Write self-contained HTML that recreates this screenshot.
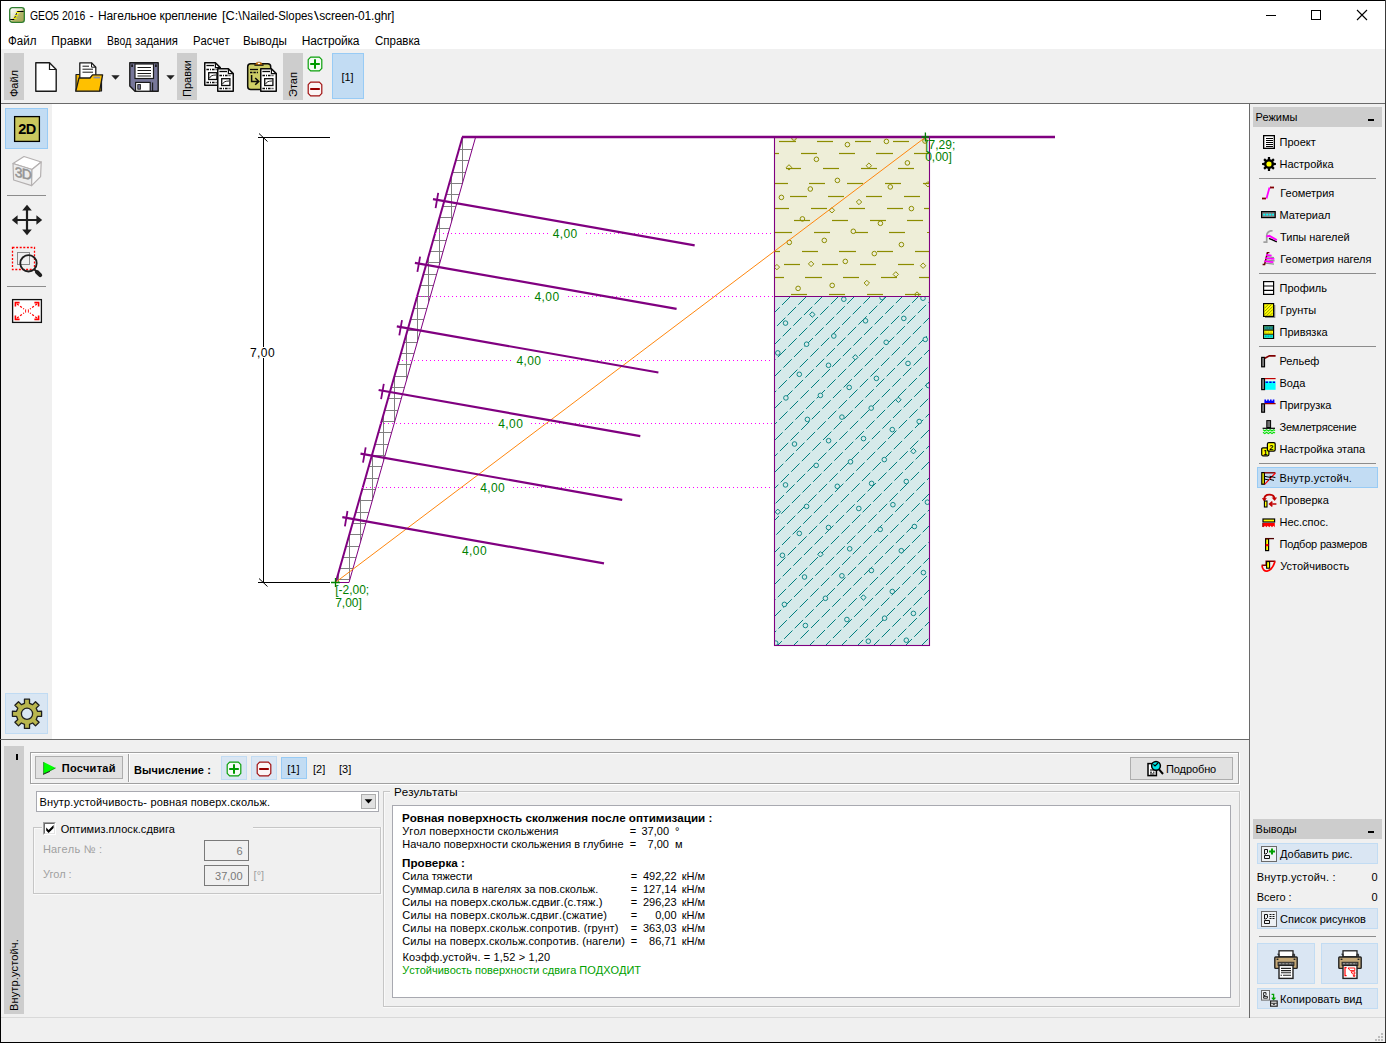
<!DOCTYPE html>
<html><head><meta charset="utf-8"><title>GEO5</title>
<style>
html,body{margin:0;padding:0}
body{width:1386px;height:1043px;position:relative;overflow:hidden;background:#f0f0f0;font-family:"Liberation Sans", sans-serif;}
.a{position:absolute;display:block}
.t{position:absolute;white-space:pre;}
</style></head><body>
<div class="a" style="left:0px;top:0px;width:1386px;height:49px;background:#fff;"></div>
<svg class="a" style="left:9px;top:7px;" width="16" height="16" viewBox="0 0 16 16">
<defs><linearGradient id="ag" x1="0" y1="0" x2="1" y2="1"><stop offset="0" stop-color="#fff"/><stop offset="0.45" stop-color="#e4e6d0"/><stop offset="0.55" stop-color="#b4b66c"/><stop offset="1" stop-color="#a3a455"/></linearGradient></defs>
<rect x="0.7" y="0.7" width="14.6" height="14.6" rx="2.6" fill="url(#ag)" stroke="#2e7d2e" stroke-width="1.3"/>
<path d="M1.2 12.5H5L8.3 4.5H14.6" fill="none" stroke="#000" stroke-width="1"/>
<path d="M6.8 5.6h3.6M5.6 8.6h3.2M4.4 11.4h3.2" stroke="#f4f000" stroke-width="1.1"/>
</svg>
<div class="t" style="left:30.4px;top:10px;font-size:12px;line-height:12px;color:#000;font-kerning:none;transform-origin:0 0;transform:scaleX(0.8659);">GEO5</div>
<div class="t" style="left:62.4px;top:10px;font-size:12px;line-height:12px;color:#000;font-kerning:none;transform-origin:0 0;transform:scaleX(0.8710);">2016</div>
<div class="t" style="left:89.6px;top:10px;font-size:12px;line-height:12px;color:#000;font-kerning:none;">-</div>
<div class="t" style="left:97.9px;top:10px;font-size:12px;line-height:12px;color:#000;letter-spacing:-0.15px;font-kerning:none;">Нагельное</div>
<div class="t" style="left:159.6px;top:10px;font-size:12px;line-height:12px;color:#000;letter-spacing:-0.156px;font-kerning:none;">крепление</div>
<div class="t" style="left:221.7px;top:10px;font-size:12px;line-height:12px;color:#000;font-kerning:none;transform-origin:0 0;transform:scaleX(1.0667);">[C:\</div>
<div class="t" style="left:242.2px;top:10px;font-size:12px;line-height:12px;color:#000;font-kerning:none;transform-origin:0 0;transform:scaleX(0.9512);">Nailed-Slopes</div>
<div class="t" style="left:314.1px;top:10px;font-size:12px;line-height:12px;color:#000;font-kerning:none;transform-origin:0 0;transform:scaleX(1.4222);">\</div>
<div class="t" style="left:319.3px;top:10px;font-size:12px;line-height:12px;color:#000;letter-spacing:-0.183px;font-kerning:none;">screen-01.ghr]</div>
<svg class="a" style="left:1260px;top:5px;" width="115" height="22" viewBox="0 0 115 22">
<path d="M6 10.5H16" stroke="#000" stroke-width="1"/>
<rect x="51.5" y="5.5" width="9" height="9" fill="none" stroke="#000" stroke-width="1"/>
<path d="M97 5L107 15M107 5L97 15" stroke="#000" stroke-width="1.1"/>
</svg>
<div class="t" style="left:8.3px;top:35px;font-size:12px;line-height:12px;color:#000;font-kerning:none;transform-origin:0 0;transform:scaleX(0.9627);">Файл</div>
<div class="t" style="left:51.3px;top:35px;font-size:12px;line-height:12px;color:#000;letter-spacing:0.03px;font-kerning:none;">Правки</div>
<div class="t" style="left:106.7px;top:35px;font-size:12px;line-height:12px;color:#000;font-kerning:none;transform-origin:0 0;transform:scaleX(0.8652);">Ввод</div>
<div class="t" style="left:134.6px;top:35px;font-size:12px;line-height:12px;color:#000;font-kerning:none;transform-origin:0 0;transform:scaleX(0.9403);">задания</div>
<div class="t" style="left:192.5px;top:35px;font-size:12px;line-height:12px;color:#000;font-kerning:none;transform-origin:0 0;transform:scaleX(0.9390);">Расчет</div>
<div class="t" style="left:243.3px;top:35px;font-size:12px;line-height:12px;color:#000;font-kerning:none;transform-origin:0 0;transform:scaleX(0.9671);">Выводы</div>
<div class="t" style="left:301.7px;top:35px;font-size:12px;line-height:12px;color:#000;letter-spacing:-0.141px;font-kerning:none;">Настройка</div>
<div class="t" style="left:374.5px;top:35px;font-size:12px;line-height:12px;color:#000;font-kerning:none;transform-origin:0 0;transform:scaleX(0.9592);">Справка</div>
<div class="a" style="left:0px;top:103px;width:1386px;height:1px;background:#6a6a6a;"></div>
<div class="a" style="left:4px;top:53px;width:20px;height:47px;background:#cdcdcd"></div><div class="t" style="left:4px;top:100px;width:47px;height:20px;line-height:20px;font-size:11px;transform-origin:0 0;transform:rotate(-90deg);text-align:left;padding-left:3px;box-sizing:border-box;color:#000">Файл</div>
<div class="a" style="left:177px;top:53px;width:20px;height:47px;background:#cdcdcd"></div><div class="t" style="left:177px;top:100px;width:47px;height:20px;line-height:20px;font-size:11px;transform-origin:0 0;transform:rotate(-90deg);text-align:left;padding-left:3px;box-sizing:border-box;color:#000">Правки</div>
<div class="a" style="left:283px;top:53px;width:20px;height:47px;background:#cdcdcd"></div><div class="t" style="left:283px;top:100px;width:47px;height:20px;line-height:20px;font-size:11px;transform-origin:0 0;transform:rotate(-90deg);text-align:left;padding-left:3px;box-sizing:border-box;color:#000">Этап</div>
<svg class="a" style="left:34px;top:61px;" width="24" height="32" viewBox="0 0 24 32">
<path d="M1.8 1.8H15.5L22.2 8.5V30.2H1.8Z" fill="#fff" stroke="#1a1a1a" stroke-width="1.4" stroke-linejoin="round"/>
<path d="M15.5 1.8V8.5H22.2" fill="none" stroke="#1a1a1a" stroke-width="1.2"/>
</svg>
<svg class="a" style="left:74px;top:61px;" width="30" height="32" viewBox="0 0 30 32">
<path d="M2 30V13.5H8L9.5 15.5H27.5V30Z" fill="#f0b400" stroke="#1a1a1a" stroke-width="1.2" stroke-linejoin="round"/>
<path d="M5.8 1.8H17.5L21.8 6.2V19H5.8Z" fill="#fff" stroke="#1a1a1a" stroke-width="1.3" stroke-linejoin="round"/>
<path d="M17.5 1.8V6.2H21.8" fill="none" stroke="#1a1a1a" stroke-width="1"/>
<path d="M8.5 5.2H15M8.5 8.2H19M8.5 11.2H19" stroke="#1a1a1a" stroke-width="1"/>
<path d="M1.8 30.2L5 17H16L18.5 13.8H28.6L25.6 30.2Z" fill="#ffc000" stroke="#1a1a1a" stroke-width="1.3" stroke-linejoin="round"/>
<rect x="19.5" y="15.6" width="6.5" height="1.8" fill="#8a8fa8"/>
</svg>
<svg class="a" style="left:111px;top:75px;" width="9" height="5" viewBox="0 0 9 5"><path d="M0.3 0.3H8.7L4.5 4.8Z" fill="#222"/></svg>
<svg class="a" style="left:166px;top:75px;" width="9" height="5" viewBox="0 0 9 5"><path d="M0.3 0.3H8.7L4.5 4.8Z" fill="#222"/></svg>
<svg class="a" style="left:128px;top:61px;" width="32" height="32" viewBox="0 0 32 32">
<path d="M1.8 1.8H30.2V30.2H7L1.8 25Z" fill="#77779a" stroke="#1a1a1a" stroke-width="1.4" stroke-linejoin="round"/>
<rect x="7" y="3" width="18.5" height="14.5" fill="#fff" stroke="#1a1a1a" stroke-width="1.2"/>
<path d="M9.5 6.5H23M9.5 9.5H23M9.5 12.5H23M9.5 15H23" stroke="#1a1a1a" stroke-width="1.1"/>
<rect x="3.2" y="3.4" width="1.8" height="2.6" fill="#1a1a1a"/><rect x="27" y="3.4" width="1.8" height="2.6" fill="#1a1a1a"/>
<rect x="7.6" y="21.4" width="14.6" height="8.8" fill="#fff" stroke="#1a1a1a" stroke-width="1.2"/>
<rect x="9.8" y="23.6" width="2.6" height="4.6" fill="#77779a" stroke="#1a1a1a" stroke-width="0.9"/>
<path d="M24.6 21.4V30" stroke="#1a1a1a" stroke-width="1.1"/>
</svg>
<svg class="a" style="left:203px;top:61px;" width="32" height="32" viewBox="0 0 32 32"><g transform="translate(1,1)">
<path d="M0.75 0.75H11.4L16.25 5.6V23.25H0.75Z" fill="#fff" stroke="#0a0a0a" stroke-width="1.5" stroke-linejoin="round"/>
<path d="M11.4 0.75V5.6H16.25" fill="none" stroke="#0a0a0a" stroke-width="1.2"/>
<path d="M2.4 3.5H10" stroke="#0a0a0a" stroke-width="1.3"/>
<path d="M2.4 7.5H14" stroke="#0a0a0a" stroke-width="1.3" stroke-dasharray="2.6 1 1 1"/>
<rect x="4.7" y="10.7" width="8.2" height="6.8" fill="#fff" stroke="#0a0a0a" stroke-width="1.3"/>
<path d="M5.6 16C6.6 13.6 8.6 13.2 12 13" fill="none" stroke="#0a0a0a" stroke-width="0.9"/>
<path d="M2.4 20.5H14" stroke="#0a0a0a" stroke-width="1.3" stroke-dasharray="2.6 1 1 1"/>
</g><g transform="translate(14,7)">
<path d="M0.75 0.75H11.4L16.25 5.6V23.25H0.75Z" fill="#fff" stroke="#0a0a0a" stroke-width="1.5" stroke-linejoin="round"/>
<path d="M11.4 0.75V5.6H16.25" fill="none" stroke="#0a0a0a" stroke-width="1.2"/>
<path d="M2.4 3.5H10" stroke="#0a0a0a" stroke-width="1.3"/>
<path d="M2.4 7.5H14" stroke="#0a0a0a" stroke-width="1.3" stroke-dasharray="2.6 1 1 1"/>
<rect x="4.7" y="10.7" width="8.2" height="6.8" fill="#fff" stroke="#0a0a0a" stroke-width="1.3"/>
<path d="M5.6 16C6.6 13.6 8.6 13.2 12 13" fill="none" stroke="#0a0a0a" stroke-width="0.9"/>
<path d="M2.4 20.5H14" stroke="#0a0a0a" stroke-width="1.3" stroke-dasharray="2.6 1 1 1"/>
</g></svg>
<svg class="a" style="left:246px;top:61px;" width="32" height="32" viewBox="0 0 32 32">
<rect x="1.7" y="2.8" width="23" height="25.6" rx="3" fill="#cdcd66" stroke="#0a0a0a" stroke-width="1.5"/>
<rect x="8.4" y="3.4" width="9.2" height="1.4" fill="#0a0a0a"/>
<path d="M9.6 3.4C9.6 0.4 16.2 0.4 16.2 3.4Z" fill="#e07a00" stroke="#8a4a00" stroke-width="0.6"/>
<ellipse cx="12.9" cy="2.5" rx="1.2" ry="0.7" fill="#fff"/>
<path d="M4 8.5H12" stroke="#0a0a0a" stroke-width="1.3"/>
<path d="M4 11.5H12" stroke="#0a0a0a" stroke-width="1.3" stroke-dasharray="2.4 1"/>
<path d="M5.6 14V20.4H12.4M9.2 17L12.8 20.4L9.2 23.8" fill="none" stroke="#0a0a0a" stroke-width="1.5"/>
<g transform="translate(14,7)">
<path d="M0.75 0.75H11.4L16.25 5.6V23.25H0.75Z" fill="#fff" stroke="#0a0a0a" stroke-width="1.5" stroke-linejoin="round"/>
<path d="M11.4 0.75V5.6H16.25" fill="none" stroke="#0a0a0a" stroke-width="1.2"/>
<path d="M2.4 3.5H10" stroke="#0a0a0a" stroke-width="1.3"/>
<path d="M2.4 7.5H14" stroke="#0a0a0a" stroke-width="1.3" stroke-dasharray="2.6 1 1 1"/>
<rect x="4.7" y="10.7" width="8.2" height="6.8" fill="#fff" stroke="#0a0a0a" stroke-width="1.3"/>
<path d="M5.6 16C6.6 13.6 8.6 13.2 12 13" fill="none" stroke="#0a0a0a" stroke-width="0.9"/>
<path d="M2.4 20.5H14" stroke="#0a0a0a" stroke-width="1.3" stroke-dasharray="2.6 1 1 1"/>
</g></svg>
<svg class="a" style="left:307px;top:56px;" width="16" height="16" viewBox="0 0 16 16"><path d="M3.6 1.2H12.4L14.8 3.6V12.4L12.4 14.8H3.6L1.2 12.4V3.6Z" fill="#f6fbf6" stroke="#0aa00a" stroke-width="1.2" stroke-linejoin="round"/><path d="M8 3.2V12.8M3.2 8H12.8" stroke="#009a00" stroke-width="2"/></svg>
<svg class="a" style="left:307px;top:81px;" width="16" height="16" viewBox="0 0 16 16"><path d="M3.6 1.2H12.4L14.8 3.6V12.4L12.4 14.8H3.6L1.2 12.4V3.6Z" fill="#fbf6f6" stroke="#a01010" stroke-width="1.2" stroke-linejoin="round"/><path d="M3.2 8H12.8" stroke="#960000" stroke-width="2"/></svg>
<div class="a" style="left:332px;top:53px;width:32px;height:46px;background:#c2dcf3;border:1px solid #98cbf5;box-sizing:border-box;"></div>
<div class="t" style="left:341.4px;top:72px;font-size:11px;line-height:11px;color:#000;">[1]</div>
<div class="a" style="left:0px;top:1017px;width:1386px;height:1px;background:#d9d9d9;"></div>
<div class="a" style="left:0px;top:0px;width:1px;height:1043px;background:#000;"></div>
<div class="a" style="left:0px;top:0px;width:1386px;height:1px;background:#000;"></div>
<div class="a" style="left:1385px;top:0px;width:1px;height:1043px;background:#3a3a3a;"></div>
<div class="a" style="left:0px;top:1042px;width:1386px;height:1px;background:#000;"></div>
<svg class="a" style="left:1370px;top:1028px;" width="14" height="14" viewBox="0 0 14 14"><rect x="11" y="5" width="2" height="2" fill="#bcbcbc"/><rect x="8" y="8" width="2" height="2" fill="#bcbcbc"/><rect x="11" y="8" width="2" height="2" fill="#bcbcbc"/><rect x="5" y="11" width="2" height="2" fill="#bcbcbc"/><rect x="8" y="11" width="2" height="2" fill="#bcbcbc"/><rect x="11" y="11" width="2" height="2" fill="#bcbcbc"/></svg>
<div class="a" style="left:1px;top:104px;width:51px;height:635px;background:#f0f0f0;"></div>
<div class="a" style="left:52px;top:104px;width:1197px;height:635px;background:#fff;"></div>
<div class="a" style="left:0px;top:739px;width:1250px;height:1px;background:#6a6a6a;"></div>
<div class="a" style="left:5px;top:108px;width:43px;height:41px;background:#c2dcf3;border:1px solid #98cbf5;box-sizing:border-box;"></div>
<svg class="a" style="left:13px;top:115px;" width="28" height="28" viewBox="0 0 28 28"><rect x="1.6" y="1.6" width="24.8" height="24.8" fill="#cbc85e" stroke="#000" stroke-width="1.3"/>
<text x="14" y="19.2" font-family="Liberation Sans" font-weight="700" font-size="14.5" text-anchor="middle" fill="#000" letter-spacing="-0.6">2D</text></svg>
<svg class="a" style="left:11px;top:154px;" width="32" height="34" viewBox="0 0 32 34">
<path d="M2 9.5L13 2.5L30.2 8L21 15.5Z" fill="#fff" stroke="#b4b0b0" stroke-width="1.2" stroke-linejoin="round"/>
<path d="M2 9.5L21 15.5L20.6 31.6L2.6 26Z" fill="#ececec" stroke="#b4b0b0" stroke-width="1.2" stroke-linejoin="round"/>
<path d="M21 15.5L30.2 8L29.6 22.6L20.6 31.6Z" fill="#f8f8f8" stroke="#b4b0b0" stroke-width="1.2" stroke-linejoin="round"/>
<text x="11.8" y="24.2" font-family="Liberation Sans" font-weight="400" font-size="14" text-anchor="middle" fill="#939393" stroke="#939393" stroke-width="0.5" transform="translate(11.5 20) skewY(12) translate(-11.5 -20)" letter-spacing="-0.9">3D</text>
</svg>
<div class="a" style="left:7px;top:195px;width:39px;height:1px;background:#8c8c8c;"></div>
<svg class="a" style="left:11px;top:204px;" width="32" height="32" viewBox="0 0 32 32">
<path d="M16 4V28M4 16H28" stroke="#1e1e1e" stroke-width="2.2"/>
<path d="M16 0.8L20.8 6.6H11.2ZM16 31.2L20.8 25.4H11.2ZM0.8 16L6.6 11.2V20.8ZM31.2 16L25.4 11.2V20.8Z" fill="#1e1e1e"/>
</svg>
<svg class="a" style="left:10px;top:245px;" width="34" height="34" viewBox="0 0 34 34">
<rect x="2.5" y="2.5" width="22" height="22" fill="none" stroke="#ff0000" stroke-width="1.3" stroke-dasharray="2 1.6"/>
<rect x="7.5" y="7.5" width="12" height="12" fill="none" stroke="#8a8a8a" stroke-width="1"/>
<circle cx="18.5" cy="18.3" r="8.2" fill="none" stroke="#1e1e1e" stroke-width="1.8"/>
<path d="M24.6 24.6L27 27" stroke="#1e1e1e" stroke-width="2"/>
<path d="M27 27L30.2 30.2" stroke="#1e1e1e" stroke-width="4" stroke-linecap="round"/>
</svg>
<div class="a" style="left:7px;top:286px;width:39px;height:1px;background:#8c8c8c;"></div>
<svg class="a" style="left:11px;top:298px;" width="32" height="26" viewBox="0 0 32 26">
<rect x="1.6" y="1.6" width="28.8" height="22.8" fill="#fff" stroke="#111" stroke-width="1.3"/>
<g stroke="#ff0000" stroke-width="1.3" fill="none">
<path d="M6 6L13 11M26 6L19 11M6 20L13 15M26 20L19 15" stroke-dasharray="2.2 1.6"/>
<path d="M4.4 8.4V4.6H8.6M27.6 8.4V4.6H23.4M4.4 17.6V21.4H8.6M27.6 17.6V21.4H23.4" stroke-width="1.6"/>
<path d="M14.6 11.4V14.6M17.4 11.4V14.6" stroke-width="0.9"/>
</g>
</svg>
<div class="a" style="left:5px;top:693px;width:43px;height:41px;background:#d9e6f3;border:1px solid #c0dbf3;box-sizing:border-box;"></div>
<svg class="a" style="left:11px;top:698px;" width="32" height="32" viewBox="0 0 32 32"><path d="M13.46 1.22L18.54 1.22L18.52 5.30L21.64 6.59L24.51 3.69L28.11 7.29L25.21 10.16L26.50 13.28L30.58 13.26L30.58 18.34L26.50 18.32L25.21 21.44L28.11 24.31L24.51 27.91L21.64 25.01L18.52 26.30L18.54 30.38L13.46 30.38L13.48 26.30L10.36 25.01L7.49 27.91L3.89 24.31L6.79 21.44L5.50 18.32L1.42 18.34L1.42 13.26L5.50 13.28L6.79 10.16L3.89 7.29L7.49 3.69L10.36 6.59L13.48 5.30Z" fill="#b9b64e" stroke="#1e1e1e" stroke-width="1.3" stroke-linejoin="round"/><circle cx="16" cy="15.8" r="5.6" fill="#d9e6f3" stroke="#1e1e1e" stroke-width="1.3"/></svg>
<div class="a" style="left:1249px;top:104px;width:1px;height:914px;background:#6a6a6a;"></div>
<div class="a" style="left:1250px;top:104px;width:135px;height:913px;background:#f0f0f0;"></div>
<div class="a" style="left:1253px;top:107px;width:129px;height:20px;background:#cdcdcd;"></div>
<div class="t" style="left:1255.6px;top:112px;font-size:11px;line-height:11px;color:#000;">Режимы</div>
<div class="a" style="left:1368px;top:119px;width:6px;height:2px;background:#000;"></div>
<svg class="a" style="left:1263px;top:135px;" width="15" height="15" viewBox="0 0 15 15"><rect x="0.65" y="0.65" width="10.7" height="12.7" fill="#fff" stroke="#000" stroke-width="1.3"/>
<path d="M2.5 3.5H9.5M2.5 5.5H9.5M2.5 7.5H9.5M2.5 9.5H9.5M2.5 11.5H9.5" stroke="#000" stroke-width="1" shape-rendering="crispEdges"/></svg>
<div class="t" style="left:1279.5px;top:137px;font-size:11px;line-height:11px;color:#000;">Проект</div>
<svg class="a" style="left:1262px;top:157px;" width="15" height="15" viewBox="0 0 15 15"><path d="M5.90 0.09L8.10 0.09L8.17 2.14L9.61 2.74L11.11 1.34L12.66 2.89L11.26 4.39L11.86 5.83L13.91 5.90L13.91 8.10L11.86 8.17L11.26 9.61L12.66 11.11L11.11 12.66L9.61 11.26L8.17 11.86L8.10 13.91L5.90 13.91L5.83 11.86L4.39 11.26L2.89 12.66L1.34 11.11L2.74 9.61L2.14 8.17L0.09 8.10L0.09 5.90L2.14 5.83L2.74 4.39L1.34 2.89L2.89 1.34L4.39 2.74L5.83 2.14Z" fill="#000"/><circle cx="7" cy="7" r="2.6" fill="#ffff00"/></svg>
<div class="t" style="left:1279.5px;top:159px;font-size:11px;line-height:11px;color:#000;">Настройка</div>
<div class="a" style="left:1259px;top:178px;width:117px;height:1px;background:#8c8c8c;"></div>
<svg class="a" style="left:1262px;top:186px;" width="15" height="15" viewBox="0 0 15 15"><path d="M0 12.5H4" stroke="#800000" stroke-width="1.8"/><path d="M8 1.5H12" stroke="#800000" stroke-width="1.8"/>
<path d="M4.5 12.5L7.5 1.5" stroke="#ff00ff" stroke-width="1.8"/></svg>
<div class="t" style="left:1280.3px;top:188px;font-size:11px;line-height:11px;color:#000;">Геометрия</div>
<svg class="a" style="left:1261px;top:208px;" width="15" height="15" viewBox="0 0 15 15"><rect x="0.6" y="3.6" width="13.6" height="6" fill="#808080" stroke="#000" stroke-width="1.2"/>
<path d="M2.2 6.6H13" stroke="#00ffff" stroke-width="1.8" stroke-dasharray="2 1"/></svg>
<div class="t" style="left:1279.5px;top:210px;font-size:11px;line-height:11px;color:#000;">Материал</div>
<svg class="a" style="left:1263px;top:230px;" width="15" height="15" viewBox="0 0 15 15"><path d="M0.4 12.2H3.7V6C3.7 2.6 6 0.8 9.6 0.6" fill="none" stroke="#a0a0a0" stroke-width="1.7"/>
<path d="M6 8.4L13.8 11.8" stroke="#000" stroke-width="1.4"/>
<path d="M3.4 6.4L6.4 5.8L13.8 10.2" fill="none" stroke="#ff00ff" stroke-width="2"/></svg>
<div class="t" style="left:1280px;top:232px;font-size:11px;line-height:11px;color:#000;">Типы нагелей</div>
<svg class="a" style="left:1262px;top:252px;" width="15" height="15" viewBox="0 0 15 15"><path d="M5.2 3.4L12 4.4M4.4 6.6L12.6 7.6M3.6 9.8L12 10.8" stroke="#909090" stroke-width="1.2" transform="translate(0,1.3)"/>
<path d="M7.4 0.6H5.4L2.6 12.6H0.6" fill="none" stroke="#600000" stroke-width="1.5"/>
<path d="M4 2.8L9.6 3.6M3 6L12.4 7M2.4 9.2L11.4 10.2" stroke="#ff00ff" stroke-width="1.7"/></svg>
<div class="t" style="left:1280.3px;top:254px;font-size:11px;line-height:11px;color:#000;">Геометрия нагеля</div>
<div class="a" style="left:1259px;top:273px;width:117px;height:1px;background:#8c8c8c;"></div>
<svg class="a" style="left:1263px;top:281px;" width="15" height="15" viewBox="0 0 15 15"><rect x="0.6" y="0.6" width="10" height="12.8" fill="#fff" stroke="#000" stroke-width="1.2"/>
<path d="M1 5H10.4M1 9.3H10.4" stroke="#000" stroke-width="1.2"/></svg>
<div class="t" style="left:1279.5px;top:283px;font-size:11px;line-height:11px;color:#000;">Профиль</div>
<svg class="a" style="left:1263px;top:303px;" width="15" height="15" viewBox="0 0 15 15"><path d="M11.7 2V14.3H2" fill="none" stroke="#8a8a8a" stroke-width="1.2"/>
<rect x="0.6" y="0.6" width="10" height="12.8" fill="#ffff00" stroke="#000" stroke-width="1.2"/>
<path d="M1.4 5.4L5.4 1.4M1.4 8.6L8.6 1.4M1.4 11.8L9.8 3.4M3.4 12.8L9.8 6.4M6.6 12.8L9.8 9.6" stroke="#909000" stroke-width="0.9"/></svg>
<div class="t" style="left:1280.3px;top:305px;font-size:11px;line-height:11px;color:#000;">Грунты</div>
<svg class="a" style="left:1263px;top:325px;" width="15" height="15" viewBox="0 0 15 15"><rect x="0.6" y="0.6" width="10" height="12.8" fill="#ffff00" stroke="#000" stroke-width="1.2"/>
<rect x="1.2" y="1.2" width="8.8" height="3.6" fill="#0a7878"/><rect x="1.2" y="9.6" width="8.8" height="3.2" fill="#00e8e8"/>
<path d="M1.2 5.2H10M1.2 9.2H10" stroke="#000" stroke-width="0.9"/>
<path d="M2 3H9" stroke="#50b0b0" stroke-width="0.9" stroke-dasharray="1.6 1"/><path d="M2 7.2H9" stroke="#c0c000" stroke-width="0.9" stroke-dasharray="1.6 1"/><path d="M2 11.2H9" stroke="#0a9090" stroke-width="0.9" stroke-dasharray="1.6 1"/></svg>
<div class="t" style="left:1279.5px;top:327px;font-size:11px;line-height:11px;color:#000;">Привязка</div>
<div class="a" style="left:1259px;top:346px;width:117px;height:1px;background:#8c8c8c;"></div>
<svg class="a" style="left:1261px;top:354px;" width="15" height="15" viewBox="0 0 15 15"><rect x="0.7" y="3.4" width="2.8" height="9.4" fill="#8a8a8a" stroke="#000" stroke-width="1.2"/>
<path d="M3.8 4.2L8.4 1.8H14.6" fill="none" stroke="#800000" stroke-width="1.7"/></svg>
<div class="t" style="left:1279.5px;top:356px;font-size:11px;line-height:11px;color:#000;">Рельеф</div>
<svg class="a" style="left:1261px;top:376px;" width="15" height="15" viewBox="0 0 15 15"><rect x="3.8" y="5.4" width="10.8" height="8.4" fill="#00ffff"/>
<rect x="0.7" y="2.6" width="2.8" height="11" fill="#8a8a8a" stroke="#000" stroke-width="1.2"/>
<path d="M3.8 2.6H14.6" stroke="#c00000" stroke-width="1.2"/>
<path d="M4.6 6.2H14" stroke="#0000e0" stroke-width="1.4" stroke-dasharray="2.4 1.2"/></svg>
<div class="t" style="left:1279.5px;top:378px;font-size:11px;line-height:11px;color:#000;">Вода</div>
<svg class="a" style="left:1261px;top:398px;" width="15" height="15" viewBox="0 0 15 15"><rect x="0.7" y="5.8" width="2.8" height="8.4" fill="#8a8a8a" stroke="#000" stroke-width="1.2"/>
<path d="M3.8 5.6H14.6" stroke="#a00000" stroke-width="1.3"/>
<path d="M3.4 1.6H5V2.8H6.2V1.6H7.8V2.8H9V1.6H10.6V2.8H11.8V1.6H13.4V5H3.4Z" fill="#0000ff"/></svg>
<div class="t" style="left:1279.5px;top:400px;font-size:11px;line-height:11px;color:#000;">Пригрузка</div>
<svg class="a" style="left:1262px;top:420px;" width="15" height="15" viewBox="0 0 15 15"><rect x="4.8" y="0.6" width="3.8" height="7" fill="#707070" stroke="#000" stroke-width="1"/>
<path d="M0.6 8.3H13" stroke="#000" stroke-width="1.2"/>
<path d="M1 9.6L2.8 11L4.6 9.6L6.4 11L8.2 9.6L10 11L11.8 9.6L13 10.6" fill="none" stroke="#00e000" stroke-width="1.1"/>
<path d="M1 12.2L2.8 13.6L4.6 12.2L6.4 13.6L8.2 12.2L10 13.6L11.8 12.2L13 13.2" fill="none" stroke="#00e000" stroke-width="1.1"/></svg>
<div class="t" style="left:1279.5px;top:422px;font-size:11px;line-height:11px;color:#000;letter-spacing:-0.2px;">Землетрясение</div>
<svg class="a" style="left:1261px;top:442px;" width="15" height="15" viewBox="0 0 15 15"><rect x="0.7" y="5.8" width="7.2" height="8" rx="1.2" fill="#ffff00" stroke="#000" stroke-width="1.2"/>
<rect x="6.4" y="0.7" width="7.8" height="8.4" rx="1.4" fill="#ffff00" stroke="#000" stroke-width="1.2"/>
<text x="4.3" y="13" font-size="7.5" font-family="Liberation Sans" font-weight="700" text-anchor="middle">1</text>
<text x="10.3" y="7.8" font-size="7.5" font-family="Liberation Sans" font-weight="700" text-anchor="middle">2</text></svg>
<div class="t" style="left:1279.5px;top:444px;font-size:11px;line-height:11px;color:#000;">Настройка этапа</div>
<div class="a" style="left:1259px;top:463px;width:117px;height:1px;background:#8c8c8c;"></div>
<div class="a" style="left:1257px;top:467px;width:121px;height:21px;background:#c2dcf3;border:1px solid #98cbf5;box-sizing:border-box;"></div>
<svg class="a" style="left:1261px;top:471px;" width="15" height="15" viewBox="0 0 15 15"><rect x="0.8" y="1.6" width="2.6" height="11.6" fill="#ffff00" stroke="#000" stroke-width="1.2"/>
<path d="M3.4 1.8H14.4" stroke="#800000" stroke-width="1.4"/>
<path d="M3.6 13.4L14.4 2" stroke="#ff0000" stroke-width="1.2"/>
<path d="M4 5.4L10 6.6M4 8.2L8 9M8.6 5.2L14.4 6.6M9 8.4L13 9.4" stroke="#000" stroke-width="1"/></svg>
<div class="t" style="left:1279.5px;top:473px;font-size:11px;line-height:11px;color:#000;letter-spacing:0.2px;">Внутр.устойч.</div>
<svg class="a" style="left:1262px;top:493px;" width="15" height="15" viewBox="0 0 15 15"><path d="M2.2 6.4C2.2 2.4 5.4 1.6 7.4 1.6C10.4 1.6 12.2 3.2 12.4 5.6" fill="none" stroke="#c00000" stroke-width="1.9"/>
<path d="M0.4 5.2L2.2 8L4.4 5.2M10.2 4.6L12.6 7.4L14.6 4.6" fill="#c00000" stroke="#c00000" stroke-width="0.8"/>
<rect x="2.4" y="8" width="2.6" height="6" fill="#ffff00" stroke="#000" stroke-width="1.1"/>
<path d="M14.4 11H8M10.4 8.6L7.6 11L10.4 13.4" fill="none" stroke="#c00000" stroke-width="1.5"/></svg>
<div class="t" style="left:1279.5px;top:495px;font-size:11px;line-height:11px;color:#000;">Проверка</div>
<svg class="a" style="left:1262px;top:515px;" width="15" height="15" viewBox="0 0 15 15"><rect x="1" y="4" width="11.6" height="3" fill="#ffff00" stroke="#000" stroke-width="1.2"/>
<path d="M0.8 8H12.8V12.2L11.4 10.8L10 12.2L8.6 10.8L7.2 12.2L5.8 10.8L4.4 12.2L3 10.8L1.6 12.2L0.8 11.4Z" fill="#ff0000"/>
<path d="M0.8 8V12" stroke="#800000" stroke-width="1"/></svg>
<div class="t" style="left:1279.5px;top:517px;font-size:11px;line-height:11px;color:#000;">Нес.спос.</div>
<svg class="a" style="left:1262px;top:537px;" width="15" height="15" viewBox="0 0 15 15"><rect x="3.6" y="1.8" width="3" height="11.8" fill="#ffff00" stroke="#000" stroke-width="1.2"/>
<path d="M3.2 1.6H12" stroke="#500000" stroke-width="1.3"/>
<rect x="3.8" y="7" width="2.6" height="2.2" fill="#ff0000"/></svg>
<div class="t" style="left:1279.5px;top:539px;font-size:11px;line-height:11px;color:#000;letter-spacing:-0.2px;">Подбор размеров</div>
<svg class="a" style="left:1261px;top:559px;" width="15" height="15" viewBox="0 0 15 15"><path d="M0.6 6.2H5.2V2.2H14.4" fill="none" stroke="#800000" stroke-width="1.5"/>
<rect x="5.6" y="2.6" width="3" height="6.6" fill="#ffff00" stroke="#000" stroke-width="1.1"/>
<path d="M1 6.6C1.6 13.8 9.8 15.4 14 2.6" fill="none" stroke="#ff0000" stroke-width="1.7"/></svg>
<div class="t" style="left:1280.3px;top:561px;font-size:11px;line-height:11px;color:#000;">Устойчивость</div>
<div class="a" style="left:1253px;top:819px;width:129px;height:20px;background:#cdcdcd;"></div>
<div class="t" style="left:1255.6px;top:824px;font-size:11px;line-height:11px;color:#000;">Выводы</div>
<div class="a" style="left:1368px;top:831px;width:6px;height:2px;background:#000;"></div>
<div class="a" style="left:1257px;top:843px;width:121px;height:21px;background:#dae6f3;border:1px solid #c2dcf3;box-sizing:border-box;"></div>
<svg class="a" style="left:1261px;top:846px;" width="16" height="16" viewBox="0 0 16 16"><rect x="0.5" y="0.5" width="15" height="15" fill="#eef1f4" stroke="#6a6a6a" stroke-width="1"/>
<path d="M3.5 3.5H6.5V6.5L5 8H3.5ZM3.5 9.5H8.5V12.5H3.5Z" fill="none" stroke="#111" stroke-width="1"/>
<path d="M11 2.5V8.5M8 5.5H14" stroke="#00a000" stroke-width="2"/></svg>
<div class="t" style="left:1280px;top:849px;font-size:11px;line-height:11px;color:#000;">Добавить рис.</div>
<div class="t" style="left:1256.7px;top:872px;font-size:11px;line-height:11px;color:#000;letter-spacing:0.2px;">Внутр.устойч. :</div>
<div class="t" style="right:8.5px;top:872px;font-size:11px;line-height:11px;color:#000;">0</div>
<div class="t" style="left:1256.7px;top:892px;font-size:11px;line-height:11px;color:#000;">Всего :</div>
<div class="t" style="right:8.5px;top:892px;font-size:11px;line-height:11px;color:#000;">0</div>
<div class="a" style="left:1257px;top:908px;width:121px;height:21px;background:#dae6f3;border:1px solid #c2dcf3;box-sizing:border-box;"></div>
<svg class="a" style="left:1261px;top:911px;" width="16" height="16" viewBox="0 0 16 16"><rect x="0.5" y="0.5" width="15" height="15" fill="#eef1f4" stroke="#6a6a6a" stroke-width="1"/>
<path d="M3.5 3.5H6.5V6.5L5 8H3.5ZM3.5 9.5H8.5V12.5H3.5Z" fill="none" stroke="#111" stroke-width="1"/>
<path d="M8.5 3.5H13.5M8.5 5.5H13.5M8.5 7.5H13.5" stroke="#111" stroke-width="1" stroke-dasharray="2 1"/></svg>
<div class="t" style="left:1280px;top:914px;font-size:11px;line-height:11px;color:#000;">Список рисунков</div>
<div class="a" style="left:1259px;top:936px;width:117px;height:1px;background:#8c8c8c;"></div>
<div class="a" style="left:1257px;top:943px;width:58px;height:41px;background:#dae6f3;border:1px solid #c2dcf3;box-sizing:border-box;"></div>
<svg class="a" style="left:1274px;top:950px;" width="24" height="30" viewBox="0 0 24 30"><rect x="5" y="0.8" width="14" height="6" fill="#fff" stroke="#222" stroke-width="1.3"/>
<path d="M3.4 4.2H5V7.4H19V4.2H20.6V7.4" fill="none" stroke="#222" stroke-width="1"/>
<rect x="0.8" y="7" width="22.4" height="11.4" rx="0.8" fill="#c4a878" stroke="#222" stroke-width="1.4"/>
<rect x="2.6" y="8.6" width="1.8" height="1.4" fill="#222"/><rect x="19.6" y="8.6" width="1.8" height="1.4" fill="#222"/>
<rect x="4" y="12.2" width="16" height="3.2" fill="#555" stroke="#222" stroke-width="0.8"/>
<path d="M5 13.8H19" stroke="#aaa" stroke-width="1" stroke-dasharray="2 1.4"/>
<rect x="5" y="15.4" width="14" height="13" fill="#fff" stroke="#222" stroke-width="1.4"/><path d="M7 18.4H17M7 20.6H17M7 22.8H17M9 25.2H17" stroke="#222" stroke-width="1.1"/><path d="M6.6 25.2H8" stroke="#222" stroke-width="1.1"/></svg>
<div class="a" style="left:1321px;top:943px;width:57px;height:41px;background:#dae6f3;border:1px solid #c2dcf3;box-sizing:border-box;"></div>
<svg class="a" style="left:1338px;top:950px;" width="24" height="30" viewBox="0 0 24 30"><rect x="5" y="0.8" width="14" height="6" fill="#fff" stroke="#222" stroke-width="1.3"/>
<path d="M3.4 4.2H5V7.4H19V4.2H20.6V7.4" fill="none" stroke="#222" stroke-width="1"/>
<rect x="0.8" y="7" width="22.4" height="11.4" rx="0.8" fill="#c4a878" stroke="#222" stroke-width="1.4"/>
<rect x="2.6" y="8.6" width="1.8" height="1.4" fill="#222"/><rect x="19.6" y="8.6" width="1.8" height="1.4" fill="#222"/>
<rect x="4" y="12.2" width="16" height="3.2" fill="#555" stroke="#222" stroke-width="0.8"/>
<path d="M5 13.8H19" stroke="#aaa" stroke-width="1" stroke-dasharray="2 1.4"/>
<rect x="5" y="15.4" width="14" height="13" fill="#fff" stroke="#222" stroke-width="1.4"/><path d="M8.6 17.6H7V25.6H8.6" fill="none" stroke="#ff0000" stroke-width="1.2"/><path d="M10 18H16.8V20.6H12.2ZM13 21.8H16.8V24H14.6ZM15.4 25H16.8V26.4H15.4Z" fill="none" stroke="#ff0000" stroke-width="0.9"/></svg>
<div class="a" style="left:1257px;top:988px;width:121px;height:21px;background:#dae6f3;border:1px solid #c2dcf3;box-sizing:border-box;"></div>
<svg class="a" style="left:1261px;top:990px;" width="18" height="18" viewBox="0 0 18 18"><rect x="0.5" y="0.5" width="8" height="9.6" fill="#eef1f4" stroke="#6a6a6a" stroke-width="1"/>
<path d="M2.6 2.6H5V4.6L4 5.6H2.6ZM2.6 6.4H6.4V8.2H2.6Z" fill="none" stroke="#111" stroke-width="0.9"/>
<path d="M10.6 4.4H12.6V9M10.8 7.6L12.6 9.6L14.4 7.6" fill="none" stroke="#00a000" stroke-width="1.3"/>
<rect x="9.6" y="11" width="6.6" height="5.2" fill="#fff" stroke="#222" stroke-width="1.2"/><path d="M9.6 13.2H16.2M12 13.2V14.4H13.8V13.2" fill="none" stroke="#222" stroke-width="0.9"/></svg>
<div class="t" style="left:1280px;top:994px;font-size:11px;line-height:11px;color:#000;letter-spacing:0.1px;">Копировать вид</div>
<div class="a" style="left:1px;top:740px;width:1248px;height:277px;background:#f0f0f0;"></div>
<div class="a" style="left:4px;top:746px;width:20px;height:268px;background:#cdcdcd;"></div>
<div class="a" style="left:16px;top:754px;width:2px;height:6px;background:#000;"></div>
<div class="t" style="left:4px;top:1014px;width:268px;height:20px;line-height:20px;font-size:11px;transform-origin:0 0;transform:rotate(-90deg);padding-left:3px;box-sizing:border-box;letter-spacing:0.15px">Внутр.устойч.</div>
<div class="a" style="left:31px;top:753px;width:1209px;height:32px;border:1px solid #fff;box-sizing:border-box;"></div><div class="a" style="left:30px;top:752px;width:1209px;height:32px;border:1px solid #a0a0a0;box-sizing:border-box;"></div>
<div class="a" style="left:35px;top:756px;width:88px;height:23px;background:#e1e1e1;border:1px solid #adadad;box-sizing:border-box;"></div>
<svg class="a" style="left:42px;top:761px;" width="15" height="14" viewBox="0 0 15 14"><path d="M1.6 1L13.6 7L1.6 13Z" fill="#00ff00"/><path d="M1.6 1V13L13.6 7" fill="none" stroke="#0a7a0a" stroke-width="0.7"/><path d="M1 13.4L8 10.4" stroke="#222" stroke-width="0.9"/></svg>
<div class="t" style="left:61.7px;top:763px;font-size:11px;line-height:11px;color:#000;font-weight:700;letter-spacing:0.3px;">Посчитай</div>
<div class="a" style="left:128px;top:754px;width:1px;height:28px;background:#a0a0a0;"></div>
<div class="a" style="left:129px;top:754px;width:1px;height:28px;background:#fff;"></div>
<div class="t" style="left:134px;top:765px;font-size:11px;line-height:11px;color:#000;font-weight:700;letter-spacing:0.1px;">Вычисление :</div>
<div class="a" style="left:221px;top:756px;width:26px;height:24px;background:#dae6f3;border:1px solid #c2dcf3;box-sizing:border-box;"></div>
<svg class="a" style="left:226px;top:761px;" width="16" height="16" viewBox="0 0 16 16"><path d="M3.6 1.2H12.4L14.8 3.6V12.4L12.4 14.8H3.6L1.2 12.4V3.6Z" fill="#f6fbf6" stroke="#0aa00a" stroke-width="1.2" stroke-linejoin="round"/><path d="M8 3.2V12.8M3.2 8H12.8" stroke="#009a00" stroke-width="2"/></svg>
<div class="a" style="left:251px;top:756px;width:26px;height:24px;background:#dae6f3;border:1px solid #c2dcf3;box-sizing:border-box;"></div>
<svg class="a" style="left:256px;top:761px;" width="16" height="16" viewBox="0 0 16 16"><path d="M3.6 1.2H12.4L14.8 3.6V12.4L12.4 14.8H3.6L1.2 12.4V3.6Z" fill="#fbf6f6" stroke="#a01010" stroke-width="1.2" stroke-linejoin="round"/><path d="M3.2 8H12.8" stroke="#960000" stroke-width="2"/></svg>
<div class="a" style="left:281px;top:757px;width:26px;height:22px;background:#c2dcf3;border:1px solid #98cbf5;box-sizing:border-box;"></div>
<div class="t" style="left:287.3px;top:764px;font-size:11px;line-height:11px;color:#000;">[1]</div>
<div class="t" style="left:313.0px;top:764px;font-size:11px;line-height:11px;color:#000;">[2]</div>
<div class="t" style="left:339.0px;top:764px;font-size:11px;line-height:11px;color:#000;">[3]</div>
<div class="a" style="left:1130px;top:757px;width:103px;height:23px;background:#e1e1e1;border:1px solid #adadad;box-sizing:border-box;"></div>
<svg class="a" style="left:1147px;top:760px;" width="17" height="17" viewBox="0 0 17 17"><rect x="1" y="3.6" width="8.4" height="12" fill="#fff" stroke="#000" stroke-width="1.5"/>
<path d="M3 10H7.5M3 12.2H5M6 12.2H7.5M3 14H7.5" stroke="#000" stroke-width="1"/>
<circle cx="9" cy="5.8" r="4.4" fill="#00e8e8" stroke="#000" stroke-width="1.5"/>
<path d="M6.4 4.4L8 6L11 3" stroke="#000" stroke-width="1.2" fill="none"/>
<path d="M12 9.4L16 14" stroke="#000" stroke-width="2"/></svg>
<div class="t" style="left:1166px;top:764px;font-size:11px;line-height:11px;color:#000;letter-spacing:-0.1px;">Подробно</div>
<div class="a" style="left:36px;top:791px;width:343px;height:21px;background:#fff;border:1px solid #a8a9b0;box-sizing:border-box;"></div>
<div class="t" style="left:39.5px;top:797px;font-size:11px;line-height:11px;color:#000;letter-spacing:0.15px;">Внутр.устойчивость- ровная поверх.скольж.</div>
<div class="a" style="left:361px;top:794px;width:15px;height:15px;background:#e1e1e1;border:1px solid #adadad;box-sizing:border-box;"></div>
<svg class="a" style="left:364px;top:799px;" width="9" height="5" viewBox="0 0 9 5"><path d="M0.6 0.3H8.4L4.5 4.6Z" fill="#000"/></svg>
<div class="a" style="left:33px;top:827px;width:9px;height:1px;background:#c6c6c6;"></div><div class="a" style="left:34px;top:828px;width:8px;height:1px;background:#f9f9f9;"></div><div class="a" style="left:253px;top:827px;width:128px;height:1px;background:#c6c6c6;"></div><div class="a" style="left:253px;top:828px;width:127px;height:1px;background:#f9f9f9;"></div><div class="a" style="left:33px;top:827px;width:1px;height:67px;background:#c6c6c6;"></div><div class="a" style="left:34px;top:828px;width:1px;height:65px;background:#f9f9f9;"></div><div class="a" style="left:380px;top:827px;width:1px;height:67px;background:#c6c6c6;"></div><div class="a" style="left:381px;top:827px;width:1px;height:68px;background:#f9f9f9;"></div><div class="a" style="left:33px;top:893px;width:348px;height:1px;background:#c6c6c6;"></div><div class="a" style="left:33px;top:894px;width:348px;height:1px;background:#f9f9f9;"></div>
<div class="a" style="left:43px;top:822px;width:13px;height:13px;background:#fff;border:1px solid #a0a0a0;box-sizing:border-box;border-right-color:#fff;border-bottom-color:#fff;"></div>
<div class="a" style="left:44px;top:823px;width:11px;height:11px;border:1px solid #696969;box-sizing:border-box;border-right-color:#e3e3e3;border-bottom-color:#e3e3e3;"></div>
<svg class="a" style="left:45px;top:824px;" width="10" height="10" viewBox="0 0 10 10"><path d="M1.2 3.6L3.6 6L8.6 1V4L3.6 9L1.2 6.6Z" fill="#000"/></svg>
<div class="t" style="left:60.7px;top:824px;font-size:11px;line-height:11px;color:#000;letter-spacing:0.05px;">Оптимиз.плоск.сдвига</div>
<div class="t" style="left:42.9px;top:844px;font-size:11px;line-height:11px;color:#a0a0a0;letter-spacing:0.194px;font-kerning:none;">Нагель № :</div>
<div class="t" style="left:43px;top:869px;font-size:11px;line-height:11px;color:#a0a0a0;">Угол :</div>
<div class="a" style="left:204px;top:840px;width:45px;height:21px;background:#f0f0f0;border:1px solid #7a7a7a;box-sizing:border-box;"></div>
<div class="a" style="left:204px;top:865px;width:45px;height:21px;background:#f0f0f0;border:1px solid #7a7a7a;box-sizing:border-box;"></div>
<div class="t" style="right:1143.4px;top:846px;font-size:11px;line-height:11px;color:#787878;">6</div>
<div class="t" style="right:1143.4px;top:871px;font-size:11px;line-height:11px;color:#787878;">37,00</div>
<div class="t" style="left:253.6px;top:870px;font-size:11px;line-height:11px;color:#a0a0a0;">[°]</div>
<div class="a" style="left:383px;top:791px;width:7px;height:1px;background:#c6c6c6;"></div><div class="a" style="left:384px;top:792px;width:6px;height:1px;background:#f9f9f9;"></div><div class="a" style="left:458px;top:791px;width:782px;height:1px;background:#c6c6c6;"></div><div class="a" style="left:458px;top:792px;width:781px;height:1px;background:#f9f9f9;"></div><div class="a" style="left:383px;top:791px;width:1px;height:216px;background:#c6c6c6;"></div><div class="a" style="left:384px;top:792px;width:1px;height:214px;background:#f9f9f9;"></div><div class="a" style="left:1239px;top:791px;width:1px;height:216px;background:#c6c6c6;"></div><div class="a" style="left:1240px;top:791px;width:1px;height:217px;background:#f9f9f9;"></div><div class="a" style="left:383px;top:1006px;width:857px;height:1px;background:#c6c6c6;"></div><div class="a" style="left:383px;top:1007px;width:857px;height:1px;background:#f9f9f9;"></div>
<div class="t" style="left:393.6px;top:787px;font-size:11px;line-height:11px;color:#000;font-kerning:none;transform-origin:0 0;transform:scaleX(1.0540);">Результаты</div>
<div class="a" style="left:392px;top:805px;width:839px;height:193px;background:#fff;border:1px solid #a8a9b0;box-sizing:border-box;"></div>
<div class="t" style="left:402.2px;top:813px;font-size:11px;line-height:11px;color:#000;font-weight:700;font-kerning:none;transform-origin:0 0;transform:scaleX(1.0570);">Ровная поверхность сколжения после оптимизации :</div>
<div class="t" style="left:402.3px;top:826px;font-size:11px;line-height:11px;color:#000;letter-spacing:0.064px;font-kerning:none;">Угол поверхности скольжения</div>
<div class="t" style="left:629.7px;top:826px;font-size:11px;line-height:11px;color:#000;">=</div>
<div class="t" style="right:717px;top:826px;font-size:11px;line-height:11px;color:#000;">37,00</div>
<div class="t" style="left:675px;top:826px;font-size:11px;line-height:11px;color:#000;">°</div>
<div class="t" style="left:402.3px;top:839px;font-size:11px;line-height:11px;color:#000;letter-spacing:-0.017px;font-kerning:none;">Начало поверхности скольжения в глубине</div>
<div class="t" style="left:629.7px;top:839px;font-size:11px;line-height:11px;color:#000;">=</div>
<div class="t" style="right:717px;top:839px;font-size:11px;line-height:11px;color:#000;">7,00</div>
<div class="t" style="left:675px;top:839px;font-size:11px;line-height:11px;color:#000;">м</div>
<div class="t" style="left:402.2px;top:858px;font-size:11px;line-height:11px;color:#000;font-weight:700;font-kerning:none;transform-origin:0 0;transform:scaleX(1.0605);">Проверка :</div>
<div class="t" style="left:402.3px;top:871px;font-size:11px;line-height:11px;color:#000;letter-spacing:-0.07px;font-kerning:none;">Сила тяжести</div>
<div class="t" style="left:630.7px;top:871px;font-size:11px;line-height:11px;color:#000;">=</div>
<div class="t" style="right:709.4px;top:871px;font-size:11px;line-height:11px;color:#000;">492,22</div>
<div class="t" style="left:681.7px;top:871px;font-size:11px;line-height:11px;color:#000;">кН/м</div>
<div class="t" style="left:402.3px;top:884px;font-size:11px;line-height:11px;color:#000;letter-spacing:-0.044px;font-kerning:none;">Суммар.сила в нагелях за пов.скольж.</div>
<div class="t" style="left:630.7px;top:884px;font-size:11px;line-height:11px;color:#000;">=</div>
<div class="t" style="right:709.4px;top:884px;font-size:11px;line-height:11px;color:#000;">127,14</div>
<div class="t" style="left:681.7px;top:884px;font-size:11px;line-height:11px;color:#000;">кН/м</div>
<div class="t" style="left:402.3px;top:897px;font-size:11px;line-height:11px;color:#000;font-kerning:none;transform-origin:0 0;transform:scaleX(1.0403);">Силы на поверх.скольж.сдвиг.(с.тяж.)</div>
<div class="t" style="left:630.7px;top:897px;font-size:11px;line-height:11px;color:#000;">=</div>
<div class="t" style="right:709.4px;top:897px;font-size:11px;line-height:11px;color:#000;">296,23</div>
<div class="t" style="left:681.7px;top:897px;font-size:11px;line-height:11px;color:#000;">кН/м</div>
<div class="t" style="left:402.3px;top:910px;font-size:11px;line-height:11px;color:#000;letter-spacing:0.159px;font-kerning:none;">Силы на поверх.скольж.сдвиг.(сжатие)</div>
<div class="t" style="left:630.7px;top:910px;font-size:11px;line-height:11px;color:#000;">=</div>
<div class="t" style="right:709.4px;top:910px;font-size:11px;line-height:11px;color:#000;">0,00</div>
<div class="t" style="left:681.7px;top:910px;font-size:11px;line-height:11px;color:#000;">кН/м</div>
<div class="t" style="left:402.3px;top:923px;font-size:11px;line-height:11px;color:#000;letter-spacing:0.124px;font-kerning:none;">Силы на поверх.скольж.сопротив. (грунт)</div>
<div class="t" style="left:630.7px;top:923px;font-size:11px;line-height:11px;color:#000;">=</div>
<div class="t" style="right:709.4px;top:923px;font-size:11px;line-height:11px;color:#000;">363,03</div>
<div class="t" style="left:681.7px;top:923px;font-size:11px;line-height:11px;color:#000;">кН/м</div>
<div class="t" style="left:402.3px;top:936px;font-size:11px;line-height:11px;color:#000;letter-spacing:0.079px;font-kerning:none;">Силы на поверх.скольж.сопротив. (нагели)</div>
<div class="t" style="left:630.7px;top:936px;font-size:11px;line-height:11px;color:#000;">=</div>
<div class="t" style="right:709.4px;top:936px;font-size:11px;line-height:11px;color:#000;">86,71</div>
<div class="t" style="left:681.7px;top:936px;font-size:11px;line-height:11px;color:#000;">кН/м</div>
<div class="t" style="left:402.5px;top:952px;font-size:11px;line-height:11px;color:#000;letter-spacing:0.131px;font-kerning:none;">Коэфф.устойч. = 1,52 &gt; 1,20</div>
<div class="t" style="left:402.3px;top:965px;font-size:11px;line-height:11px;color:#00a000;letter-spacing:-0.019px;font-kerning:none;">Устойчивость поверхности сдвига ПОДХОДИТ</div>
<svg class="a" style="left:52px;top:104px;" width="1197" height="635" viewBox="52 104 1197 635"><rect x="774.5" y="137" width="155" height="159.5" fill="#eeeed8"/><rect x="774.5" y="296.5" width="155" height="349" fill="#d6eaea"/><defs><clipPath id="c1"><rect x="775" y="138" width="154" height="158"/></clipPath><clipPath id="c2"><rect x="775" y="297" width="154" height="348"/></clipPath><clipPath id="cw"><polygon points="462.5,137 475.5,137 349,582 336,582"/></clipPath></defs><g clip-path="url(#c1)" stroke="#8c8c00" stroke-width="1.2" fill="none"><path d="M779 141.5H796"/><path d="M817 141.5H833"/><path d="M855 141.5H871"/><path d="M893 141.5H909"/><path d="M775 153.5H779"/><path d="M801 153.5H817"/><path d="M839 153.5H855"/><path d="M876 153.5H893"/><path d="M914 153.5H929"/><path d="M786 168.5H801"/><path d="M823 168.5H839"/><path d="M861 168.5H877"/><path d="M898 168.5H914"/><path d="M775 183.5H788"/><path d="M809 183.5H825"/><path d="M847 183.5H863"/><path d="M885 183.5H901"/><path d="M923 183.5H929"/><path d="M790 196.5H807"/><path d="M828 196.5H844"/><path d="M866 196.5H882"/><path d="M904 196.5H920"/><path d="M775 208.5H789"/><path d="M811 208.5H827"/><path d="M849 208.5H865"/><path d="M887 208.5H903"/><path d="M924 208.5H929"/><path d="M794 220.5H810"/><path d="M832 220.5H848"/><path d="M870 220.5H886"/><path d="M907 220.5H923"/><path d="M775 232.5H792"/><path d="M814 232.5H830"/><path d="M855 232.5H868"/><path d="M889 232.5H905"/><path d="M927 232.5H929"/><path d="M775 251.5H780"/><path d="M802 251.5H818"/><path d="M839 251.5H856"/><path d="M877 251.5H893"/><path d="M915 251.5H929"/><path d="M784 264.5H800"/><path d="M822 264.5H838"/><path d="M860 264.5H876"/><path d="M898 264.5H914"/><path d="M775 277.5H784"/><path d="M805 277.5H822"/><path d="M843 277.5H859"/><path d="M881 277.5H897"/><path d="M919 277.5H929"/><path d="M791 294.5H807"/><path d="M829 294.5H845"/><path d="M867 294.5H883"/><path d="M905 294.5H921"/><circle cx="794" cy="138" r="2.3" stroke-width="1"/><circle cx="847.4" cy="144.6" r="2.3" stroke-width="1"/><circle cx="886.4" cy="141.4" r="2.3" stroke-width="1"/><circle cx="816.4" cy="159.3" r="2.3" stroke-width="1"/><circle cx="837.4" cy="180.4" r="2.3" stroke-width="1"/><circle cx="810.3" cy="189" r="2.3" stroke-width="1"/><circle cx="890.3" cy="186.9" r="2.3" stroke-width="1"/><circle cx="781.4" cy="197.4" r="2.3" stroke-width="1"/><circle cx="911.4" cy="208.6" r="2.3" stroke-width="1"/><circle cx="802.4" cy="218.9" r="2.3" stroke-width="1"/><circle cx="880.4" cy="223.3" r="2.3" stroke-width="1"/><circle cx="853.3" cy="231.3" r="2.3" stroke-width="1"/><circle cx="789.3" cy="242.4" r="2.3" stroke-width="1"/><circle cx="824.3" cy="240.4" r="2.3" stroke-width="1"/><circle cx="901.4" cy="244.6" r="2.3" stroke-width="1"/><circle cx="874.3" cy="253.6" r="2.3" stroke-width="1"/><circle cx="845.3" cy="261.4" r="2.3" stroke-width="1"/><circle cx="832.2" cy="285.4" r="2.3" stroke-width="1"/><circle cx="798.1" cy="288.4" r="2.3" stroke-width="1"/><circle cx="907.4" cy="162.9" r="2.3" stroke-width="1"/><circle cx="925" cy="141" r="2.3" stroke-width="1"/><path d="M786.3 167.4L789 164.70000000000002L791.7 167.4L789 170.1Z" stroke-width="1"/><path d="M866.1999999999999 165.7L868.9 163.0L871.6 165.7L868.9 168.39999999999998Z" stroke-width="1"/><path d="M925.1999999999999 184.3L927.9 181.60000000000002L930.6 184.3L927.9 187.0Z" stroke-width="1"/><path d="M856.3 202L859 199.3L861.7 202L859 204.7Z" stroke-width="1"/><path d="M829.1999999999999 210.3L831.9 207.60000000000002L834.6 210.3L831.9 213.0Z" stroke-width="1"/><path d="M808.4 263.9L811.1 261.2L813.8000000000001 263.9L811.1 266.59999999999997Z" stroke-width="1"/><path d="M920.4 265.7L923.1 263.0L925.8000000000001 265.7L923.1 268.4Z" stroke-width="1"/><path d="M774.1999999999999 267.1L776.9 264.40000000000003L779.6 267.1L776.9 269.8Z" stroke-width="1"/><path d="M893.0999999999999 274.4L895.8 271.7L898.5 274.4L895.8 277.09999999999997Z" stroke-width="1"/><path d="M864.0999999999999 283L866.8 280.3L869.5 283L866.8 285.7Z" stroke-width="1"/><path d="M914.3 294.5L917 291.8L919.7 294.5L917 297.2Z" stroke-width="1"/></g><g clip-path="url(#c2)" stroke="#007e7e" stroke-width="1" fill="none"><path d="M770 253L932 91" stroke-dasharray="11.8 3.2" stroke-dashoffset="0"/><path d="M770 269L932 107" stroke-dasharray="11.8 3.2" stroke-dashoffset="7"/><path d="M770 285L932 123" stroke-dasharray="11.8 3.2" stroke-dashoffset="14"/><path d="M770 301L932 139" stroke-dasharray="11.8 3.2" stroke-dashoffset="6"/><path d="M770 317L932 155" stroke-dasharray="11.8 3.2" stroke-dashoffset="13"/><path d="M770 333L932 171" stroke-dasharray="11.8 3.2" stroke-dashoffset="5"/><path d="M770 349L932 187" stroke-dasharray="11.8 3.2" stroke-dashoffset="12"/><path d="M770 365L932 203" stroke-dasharray="11.8 3.2" stroke-dashoffset="4"/><path d="M770 381L932 219" stroke-dasharray="11.8 3.2" stroke-dashoffset="11"/><path d="M770 397L932 235" stroke-dasharray="11.8 3.2" stroke-dashoffset="3"/><path d="M770 413L932 251" stroke-dasharray="11.8 3.2" stroke-dashoffset="10"/><path d="M770 429L932 267" stroke-dasharray="11.8 3.2" stroke-dashoffset="2"/><path d="M770 445L932 283" stroke-dasharray="11.8 3.2" stroke-dashoffset="9"/><path d="M770 461L932 299" stroke-dasharray="11.8 3.2" stroke-dashoffset="1"/><path d="M770 477L932 315" stroke-dasharray="11.8 3.2" stroke-dashoffset="8"/><path d="M770 493L932 331" stroke-dasharray="11.8 3.2" stroke-dashoffset="0"/><path d="M770 509L932 347" stroke-dasharray="11.8 3.2" stroke-dashoffset="7"/><path d="M770 525L932 363" stroke-dasharray="11.8 3.2" stroke-dashoffset="14"/><path d="M770 541L932 379" stroke-dasharray="11.8 3.2" stroke-dashoffset="6"/><path d="M770 557L932 395" stroke-dasharray="11.8 3.2" stroke-dashoffset="13"/><path d="M770 573L932 411" stroke-dasharray="11.8 3.2" stroke-dashoffset="5"/><path d="M770 589L932 427" stroke-dasharray="11.8 3.2" stroke-dashoffset="12"/><path d="M770 605L932 443" stroke-dasharray="11.8 3.2" stroke-dashoffset="4"/><path d="M770 621L932 459" stroke-dasharray="11.8 3.2" stroke-dashoffset="11"/><path d="M770 637L932 475" stroke-dasharray="11.8 3.2" stroke-dashoffset="3"/><path d="M770 653L932 491" stroke-dasharray="11.8 3.2" stroke-dashoffset="10"/><path d="M770 669L932 507" stroke-dasharray="11.8 3.2" stroke-dashoffset="2"/><path d="M770 685L932 523" stroke-dasharray="11.8 3.2" stroke-dashoffset="9"/><path d="M770 701L932 539" stroke-dasharray="11.8 3.2" stroke-dashoffset="1"/><path d="M770 717L932 555" stroke-dasharray="11.8 3.2" stroke-dashoffset="8"/><path d="M770 733L932 571" stroke-dasharray="11.8 3.2" stroke-dashoffset="0"/><path d="M770 749L932 587" stroke-dasharray="11.8 3.2" stroke-dashoffset="7"/><path d="M770 765L932 603" stroke-dasharray="11.8 3.2" stroke-dashoffset="14"/><path d="M770 781L932 619" stroke-dasharray="11.8 3.2" stroke-dashoffset="6"/><path d="M770 797L932 635" stroke-dasharray="11.8 3.2" stroke-dashoffset="13"/><circle cx="843.8" cy="299.2" r="2.3" fill="#d6eaea" stroke-width="0.9"/><circle cx="882.1" cy="297.6" r="2.3" fill="#d6eaea" stroke-width="0.9"/><circle cx="923" cy="298.2" r="2.3" fill="#d6eaea" stroke-width="0.9"/><path d="M809.5999999999999 314.5L812.3 311.8L815.0 314.5L812.3 317.2Z" fill="#d6eaea"/><circle cx="785.5" cy="323.1" r="2.3" fill="#d6eaea" stroke-width="0.9"/><circle cx="865.5" cy="320.8" r="2.3" fill="#d6eaea" stroke-width="0.9"/><circle cx="903.8" cy="318.4" r="2.3" fill="#d6eaea" stroke-width="0.9"/><circle cx="833.8" cy="336" r="2.3" fill="#d6eaea" stroke-width="0.9"/><circle cx="806.6" cy="344.2" r="2.3" fill="#d6eaea" stroke-width="0.9"/><circle cx="777.8" cy="352.9" r="2.3" fill="#d6eaea" stroke-width="0.9"/><circle cx="886.2" cy="342.3" r="2.3" fill="#d6eaea" stroke-width="0.9"/><circle cx="925.3" cy="339.4" r="2.3" fill="#d6eaea" stroke-width="0.9"/><path d="M852.5999999999999 357.3L855.3 354.6L858.0 357.3L855.3 360.0Z" fill="#d6eaea"/><circle cx="828.5" cy="365.3" r="2.3" fill="#d6eaea" stroke-width="0.9"/><circle cx="908" cy="363.4" r="2.3" fill="#d6eaea" stroke-width="0.9"/><circle cx="799.3" cy="374.3" r="2.3" fill="#d6eaea" stroke-width="0.9"/><circle cx="876.4" cy="378.4" r="2.3" fill="#d6eaea" stroke-width="0.9"/><circle cx="849.2" cy="387.4" r="2.3" fill="#d6eaea" stroke-width="0.9"/><circle cx="928.4" cy="385.5" r="2.3" fill="#d6eaea" stroke-width="0.9"/><circle cx="785.9" cy="397.9" r="2.3" fill="#d6eaea" stroke-width="0.9"/><circle cx="820.4" cy="395.4" r="2.3" fill="#d6eaea" stroke-width="0.9"/><path d="M895.6999999999999 399.8L898.4 397.1L901.1 399.8L898.4 402.5Z" fill="#d6eaea"/><circle cx="871.2" cy="408.1" r="2.3" fill="#d6eaea" stroke-width="0.9"/><circle cx="807.4" cy="419.4" r="2.3" fill="#d6eaea" stroke-width="0.9"/><circle cx="841.9" cy="417.1" r="2.3" fill="#d6eaea" stroke-width="0.9"/><circle cx="919.2" cy="421.5" r="2.3" fill="#d6eaea" stroke-width="0.9"/><circle cx="892.3" cy="429.6" r="2.3" fill="#d6eaea" stroke-width="0.9"/><circle cx="794.5" cy="444" r="2.3" fill="#d6eaea" stroke-width="0.9"/><circle cx="828.6" cy="440.7" r="2.3" fill="#d6eaea" stroke-width="0.9"/><circle cx="863.5" cy="438.6" r="2.3" fill="#d6eaea" stroke-width="0.9"/><path d="M910.6999999999999 451.2L913.4 448.5L916.1 451.2L913.4 453.9Z" fill="#d6eaea"/><circle cx="816.2" cy="465.4" r="2.3" fill="#d6eaea" stroke-width="0.9"/><circle cx="850.5" cy="461.8" r="2.3" fill="#d6eaea" stroke-width="0.9"/><circle cx="884.3" cy="459.6" r="2.3" fill="#d6eaea" stroke-width="0.9"/><circle cx="785.5" cy="484.9" r="2.3" fill="#d6eaea" stroke-width="0.9"/><circle cx="837.3" cy="486.3" r="2.3" fill="#d6eaea" stroke-width="0.9"/><circle cx="871.6" cy="483.4" r="2.3" fill="#d6eaea" stroke-width="0.9"/><circle cx="906.3" cy="481.5" r="2.3" fill="#d6eaea" stroke-width="0.9"/><circle cx="806.6" cy="506.4" r="2.3" fill="#d6eaea" stroke-width="0.9"/><path d="M775.0999999999999 511.8L777.8 509.1L780.5 511.8L777.8 514.5Z" fill="#d6eaea"/><circle cx="858.8" cy="508.5" r="2.3" fill="#d6eaea" stroke-width="0.9"/><circle cx="892.9" cy="504.7" r="2.3" fill="#d6eaea" stroke-width="0.9"/><circle cx="927.4" cy="502.2" r="2.3" fill="#d6eaea" stroke-width="0.9"/><circle cx="799.3" cy="533.4" r="2.3" fill="#d6eaea" stroke-width="0.9"/><circle cx="828.5" cy="527.5" r="2.3" fill="#d6eaea" stroke-width="0.9"/><circle cx="880.2" cy="529.4" r="2.3" fill="#d6eaea" stroke-width="0.9"/><circle cx="914.4" cy="526.5" r="2.3" fill="#d6eaea" stroke-width="0.9"/><circle cx="782.4" cy="555.3" r="2.3" fill="#d6eaea" stroke-width="0.9"/><path d="M817.6999999999999 554.3L820.4 551.5999999999999L823.1 554.3L820.4 557.0Z" fill="#d6eaea"/><circle cx="849.7" cy="548.8" r="2.3" fill="#d6eaea" stroke-width="0.9"/><circle cx="901.3" cy="550.7" r="2.3" fill="#d6eaea" stroke-width="0.9"/><circle cx="804.5" cy="577" r="2.3" fill="#d6eaea" stroke-width="0.9"/><circle cx="841.9" cy="575.8" r="2.3" fill="#d6eaea" stroke-width="0.9"/><circle cx="871.4" cy="570.5" r="2.3" fill="#d6eaea" stroke-width="0.9"/><circle cx="923.4" cy="572.6" r="2.3" fill="#d6eaea" stroke-width="0.9"/><circle cx="784.4" cy="604.4" r="2.3" fill="#d6eaea" stroke-width="0.9"/><circle cx="825.4" cy="598.3" r="2.3" fill="#d6eaea" stroke-width="0.9"/><path d="M860.6999999999999 597.5L863.4 594.8L866.1 597.5L863.4 600.2Z" fill="#d6eaea"/><circle cx="892.3" cy="591.5" r="2.3" fill="#d6eaea" stroke-width="0.9"/><circle cx="805.4" cy="625.5" r="2.3" fill="#d6eaea" stroke-width="0.9"/><circle cx="846.9" cy="619.5" r="2.3" fill="#d6eaea" stroke-width="0.9"/><circle cx="884.6" cy="618.2" r="2.3" fill="#d6eaea" stroke-width="0.9"/><circle cx="913.4" cy="613.4" r="2.3" fill="#d6eaea" stroke-width="0.9"/><circle cx="868.3" cy="641.2" r="2.3" fill="#d6eaea" stroke-width="0.9"/><circle cx="906.3" cy="640.2" r="2.3" fill="#d6eaea" stroke-width="0.9"/><circle cx="775.7" cy="643.1" r="2.3" fill="#d6eaea" stroke-width="0.9"/></g><g stroke="#800080" stroke-width="1.1" fill="none"><rect x="774.5" y="137" width="155" height="508.5"/><path d="M774.5 296.5H929.5"/></g><g clip-path="url(#cw)" stroke="#808080" stroke-width="1" shape-rendering="crispEdges"><path d="M462.6 130V590"/><path d="M451.3 130V590"/><path d="M439.9 130V590"/><path d="M428.6 130V590"/><path d="M417.3 130V590"/><path d="M406.0 130V590"/><path d="M394.6 130V590"/><path d="M383.3 130V590"/><path d="M372.0 130V590"/><path d="M360.6 130V590"/><path d="M349.3 130V590"/><path d="M338.0 130V590"/><path d="M326.6 130V590"/><path d="M330 149.4H480"/><path d="M330 160.7H480"/><path d="M330 172.1H480"/><path d="M330 183.4H480"/><path d="M330 194.7H480"/><path d="M330 206.1H480"/><path d="M330 217.4H480"/><path d="M330 228.7H480"/><path d="M330 240.0H480"/><path d="M330 251.4H480"/><path d="M330 262.7H480"/><path d="M330 274.0H480"/><path d="M330 285.4H480"/><path d="M330 296.7H480"/><path d="M330 308.0H480"/><path d="M330 319.4H480"/><path d="M330 330.7H480"/><path d="M330 342.0H480"/><path d="M330 353.3H480"/><path d="M330 364.7H480"/><path d="M330 376.0H480"/><path d="M330 387.3H480"/><path d="M330 398.7H480"/><path d="M330 410.0H480"/><path d="M330 421.3H480"/><path d="M330 432.6H480"/><path d="M330 444.0H480"/><path d="M330 455.3H480"/><path d="M330 466.6H480"/><path d="M330 478.0H480"/><path d="M330 489.3H480"/><path d="M330 500.6H480"/><path d="M330 512.0H480"/><path d="M330 523.3H480"/><path d="M330 534.6H480"/><path d="M330 546.0H480"/><path d="M330 557.3H480"/><path d="M330 568.6H480"/><path d="M330 579.9H480"/><path d="M330 591.3H480"/></g><path d="M475.5 137.5L349 582.5H336" stroke="#800080" stroke-width="1" fill="none"/><path d="M462.5 137L336 581.5" stroke="#800080" stroke-width="2" fill="none"/><path d="M435 233.5H549M586 233.5H773" stroke="#ff00ff" stroke-width="1" stroke-dasharray="1 3" shape-rendering="crispEdges"/><path d="M416 296.9H531M568 296.9H773" stroke="#ff00ff" stroke-width="1" stroke-dasharray="1 3" shape-rendering="crispEdges"/><path d="M398 360.4H512M549 360.4H773" stroke="#ff00ff" stroke-width="1" stroke-dasharray="1 3" shape-rendering="crispEdges"/><path d="M380 423.8H494M531 423.8H773" stroke="#ff00ff" stroke-width="1" stroke-dasharray="1 3" shape-rendering="crispEdges"/><path d="M362 487.2H476M513 487.2H773" stroke="#ff00ff" stroke-width="1" stroke-dasharray="1 3" shape-rendering="crispEdges"/><path d="M336 582L925.4 137.3" stroke="#ff8000" stroke-width="0.95" fill="none"/><path d="M433.0 199.1L694.7 245.3" stroke="#800080" stroke-width="2.2"/><path d="M438.2 192.9L435.6 208.2" stroke="#800080" stroke-width="1.8"/><path d="M414.9 262.8L676.6 308.9" stroke="#800080" stroke-width="2.2"/><path d="M420.1 256.6L417.4 271.8" stroke="#800080" stroke-width="1.8"/><path d="M396.8 326.4L658.4 372.5" stroke="#800080" stroke-width="2.2"/><path d="M402.0 320.2L399.3 335.4" stroke="#800080" stroke-width="1.8"/><path d="M378.6 390.0L640.3 436.1" stroke="#800080" stroke-width="2.2"/><path d="M383.8 383.8L381.1 399.1" stroke="#800080" stroke-width="1.8"/><path d="M360.5 453.6L622.2 499.8" stroke="#800080" stroke-width="2.2"/><path d="M365.7 447.4L363.0 462.7" stroke="#800080" stroke-width="1.8"/><path d="M342.3 517.2L604.0 563.4" stroke="#800080" stroke-width="2.2"/><path d="M347.5 511.0L344.9 526.3" stroke="#800080" stroke-width="1.8"/><path d="M462 137H1055" stroke="#800080" stroke-width="2.4"/><g stroke="#000" stroke-width="1" shape-rendering="crispEdges"><path d="M258 137.5H330M263.5 137V582M258 582.5H330"/></g><g stroke="#000" stroke-width="1"><path d="M259 133.5L267.5 141.5M259 578.5L267.5 586.5"/></g><g stroke="#008000" stroke-width="1.3"><path d="M925.4 132.5V141.5M921.5 137H929M335.5 578V587M331 582.5H340"/></g><rect x="247" y="347" width="30" height="11" fill="#fff"/><text x="250" y="357" font-family="Liberation Sans" font-size="12" fill="#000" letter-spacing="0.4">7,00</text><text x="552.7" y="238" font-family="Liberation Sans" font-size="12" fill="#008000" letter-spacing="0.4">4,00</text><text x="534.5600000000001" y="301" font-family="Liberation Sans" font-size="12" fill="#008000" letter-spacing="0.4">4,00</text><text x="516.4200000000001" y="365" font-family="Liberation Sans" font-size="12" fill="#008000" letter-spacing="0.4">4,00</text><text x="498.28000000000003" y="428" font-family="Liberation Sans" font-size="12" fill="#008000" letter-spacing="0.4">4,00</text><text x="480.14000000000004" y="492" font-family="Liberation Sans" font-size="12" fill="#008000" letter-spacing="0.4">4,00</text><text x="462.00000000000006" y="555" font-family="Liberation Sans" font-size="12" fill="#008000" letter-spacing="0.4">4,00</text><text x="925.2" y="148.6" font-family="Liberation Sans" font-size="12" fill="#008000" letter-spacing="0">[7,29;</text><text x="925.2" y="161.4" font-family="Liberation Sans" font-size="12" fill="#008000" letter-spacing="0">0,00]</text><text x="335.2" y="594" font-family="Liberation Sans" font-size="12" fill="#008000" letter-spacing="0">[-2,00;</text><text x="335.2" y="607" font-family="Liberation Sans" font-size="12" fill="#008000" letter-spacing="0">7,00]</text></svg>
</body></html>
